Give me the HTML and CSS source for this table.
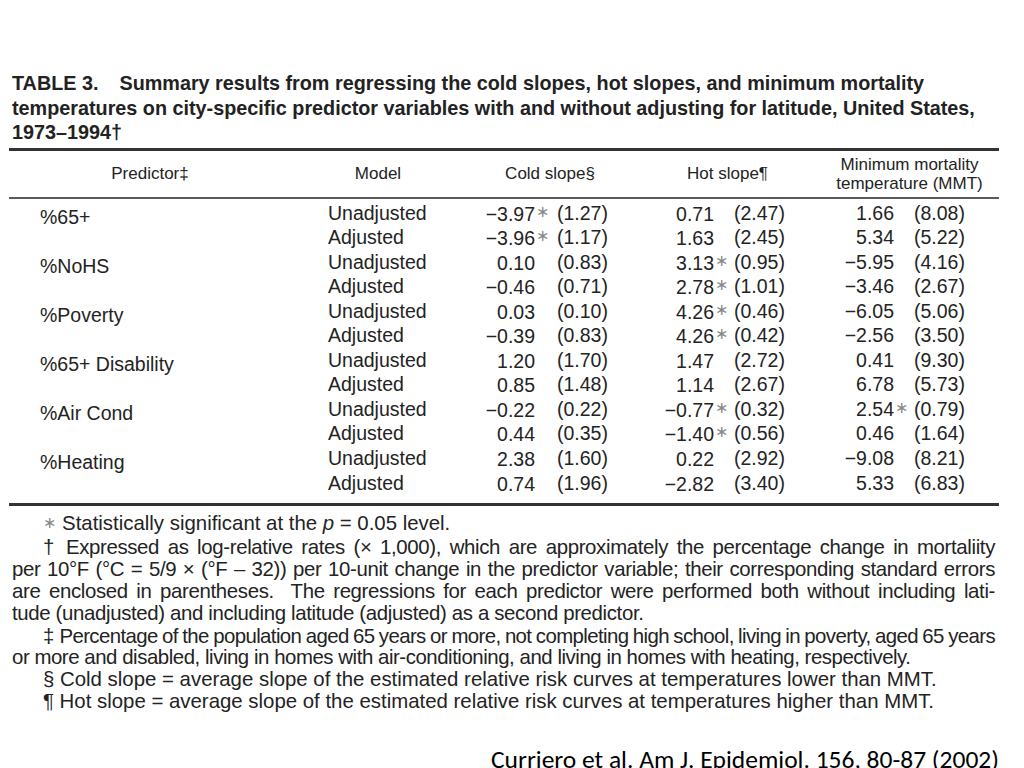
FILE: index.html
```html
<!DOCTYPE html>
<html lang="en">
<head>
<meta charset="utf-8">
<title>Table 3</title>
<link rel="stylesheet" href="styles.css">
</head>
<body>
<div class="slide">
  <div class="figure">
    <h1 class="caption"><span class="lbl">TABLE 3.</span>Summary results from regressing the cold slopes, hot slopes, and minimum mortality<br>temperatures on city-specific predictor variables with and without adjusting for latitude, United States,<br>1973–1994†</h1>
    <div class="tbl">
      <div class="thead">
        <div>Predictor‡</div>
        <div>Model</div>
        <div>Cold slope§</div>
        <div>Hot slope¶</div>
        <div>Minimum mortality<br>temperature (MMT)</div>
      </div>
      <div class="tbody">
        <div class="row"><span class="pred">%65+</span><span class="mod">Unadjusted</span><span class="n lo">−3.97</span><span class="s">∗</span><span class="p">(1.27)</span><span class="n lo">0.71</span><span class="s"></span><span class="p">(2.47)</span><span class="n">1.66</span><span class="s"></span><span class="p">(8.08)</span></div>
        <div class="row"><span class="pred"></span><span class="mod">Adjusted</span><span class="n lo">−3.96</span><span class="s">∗</span><span class="p">(1.17)</span><span class="n lo">1.63</span><span class="s"></span><span class="p">(2.45)</span><span class="n">5.34</span><span class="s"></span><span class="p">(5.22)</span></div>
        <div class="row"><span class="pred">%NoHS</span><span class="mod">Unadjusted</span><span class="n lo">0.10</span><span class="s"></span><span class="p">(0.83)</span><span class="n lo">3.13</span><span class="s">∗</span><span class="p">(0.95)</span><span class="n">−5.95</span><span class="s"></span><span class="p">(4.16)</span></div>
        <div class="row"><span class="pred"></span><span class="mod">Adjusted</span><span class="n lo">−0.46</span><span class="s"></span><span class="p">(0.71)</span><span class="n lo">2.78</span><span class="s">∗</span><span class="p">(1.01)</span><span class="n">−3.46</span><span class="s"></span><span class="p">(2.67)</span></div>
        <div class="row"><span class="pred">%Poverty</span><span class="mod">Unadjusted</span><span class="n lo">0.03</span><span class="s"></span><span class="p">(0.10)</span><span class="n lo">4.26</span><span class="s">∗</span><span class="p">(0.46)</span><span class="n">−6.05</span><span class="s"></span><span class="p">(5.06)</span></div>
        <div class="row"><span class="pred"></span><span class="mod">Adjusted</span><span class="n lo">−0.39</span><span class="s"></span><span class="p">(0.83)</span><span class="n lo">4.26</span><span class="s">∗</span><span class="p">(0.42)</span><span class="n">−2.56</span><span class="s"></span><span class="p">(3.50)</span></div>
        <div class="row"><span class="pred">%65+ Disability</span><span class="mod">Unadjusted</span><span class="n lo">1.20</span><span class="s"></span><span class="p">(1.70)</span><span class="n lo">1.47</span><span class="s"></span><span class="p">(2.72)</span><span class="n">0.41</span><span class="s"></span><span class="p">(9.30)</span></div>
        <div class="row"><span class="pred"></span><span class="mod">Adjusted</span><span class="n lo">0.85</span><span class="s"></span><span class="p">(1.48)</span><span class="n lo">1.14</span><span class="s"></span><span class="p">(2.67)</span><span class="n">6.78</span><span class="s"></span><span class="p">(5.73)</span></div>
        <div class="row"><span class="pred">%Air Cond</span><span class="mod">Unadjusted</span><span class="n lo">−0.22</span><span class="s"></span><span class="p">(0.22)</span><span class="n lo">−0.77</span><span class="s">∗</span><span class="p">(0.32)</span><span class="n">2.54</span><span class="s">∗</span><span class="p">(0.79)</span></div>
        <div class="row"><span class="pred"></span><span class="mod">Adjusted</span><span class="n lo">0.44</span><span class="s"></span><span class="p">(0.35)</span><span class="n lo">−1.40</span><span class="s">∗</span><span class="p">(0.56)</span><span class="n">0.46</span><span class="s"></span><span class="p">(1.64)</span></div>
        <div class="row"><span class="pred">%Heating</span><span class="mod">Unadjusted</span><span class="n lo">2.38</span><span class="s"></span><span class="p">(1.60)</span><span class="n lo">0.22</span><span class="s"></span><span class="p">(2.92)</span><span class="n">−9.08</span><span class="s"></span><span class="p">(8.21)</span></div>
        <div class="row"><span class="pred"></span><span class="mod">Adjusted</span><span class="n lo">0.74</span><span class="s"></span><span class="p">(1.96)</span><span class="n lo">−2.82</span><span class="s"></span><span class="p">(3.40)</span><span class="n">5.33</span><span class="s"></span><span class="p">(6.83)</span></div>
      </div>
    </div>
    <div class="notes">
      <p class="note"><span class="ln"><span class="star">∗</span> Statistically significant at the <i>p</i> = 0.05 level.</span></p>
      <p class="note gap cond">
        <span class="ln j">† Expressed as log-relative rates (× 1,000), which are approximately the percentage change in mortaliity</span>
        <span class="ln j flush">per 10°F (°C = 5/9 × (°F – 32)) per 10-unit change in the predictor variable; their corresponding standard errors</span>
        <span class="ln j flush">are enclosed in parentheses.&nbsp; The regressions for each predictor were performed both without including lati-</span>
        <span class="ln flush">tude (unadjusted) and including latitude (adjusted) as a second predictor.</span>
      </p>
      <p class="note gap tight">
        <span class="ln j squeeze">‡ Percentage of the population aged 65 years or more, not completing high school, living in poverty, aged 65 years</span>
        <span class="ln flush">or more and disabled, living in homes with air-conditioning, and living in homes with heating, respectively.</span>
      </p>
      <p class="note"><span class="ln">§ Cold slope = average slope of the estimated relative risk curves at temperatures lower than MMT.</span></p>
      <p class="note"><span class="ln">¶ Hot slope = average slope of the estimated relative risk curves at temperatures higher than MMT.</span></p>
    </div>
  </div>
  <p class="cite">Curriero et al. Am J. Epidemiol. 156, 80-87 (2002)</p>
</div>
</body>
</html>
```

FILE: styles.css
```css
html, body {
  margin: 0;
  padding: 0;
  background: #ffffff;
}

body {
  font-family: "Liberation Sans", Arial, "DejaVu Sans", sans-serif;
  color: #232323;
}

.slide {
  width: 1024px;
  height: 768px;
  overflow: hidden;
  box-sizing: border-box;
  padding: 71px 0 0 9px;
  display: flex;
  flex-direction: column;
}

.figure {
  width: 990px;
}

.caption {
  margin: 0;
  padding-left: 3px;
  font-size: 19.8px;
  font-weight: bold;
  line-height: 24.5px;
  color: #222;
  white-space: nowrap;
}

.caption .lbl {
  margin-right: 21px;
}

.tbl {
  margin-top: 3px;
  border-top: 3px solid #333;
  border-bottom: 3px solid #333;
}

.thead {
  display: grid;
  grid-template-columns: 282px 174px 170px 185px 179px;
  align-items: center;
  height: 46px;
  border-bottom: 2px solid #5a5a5a;
  font-size: 17px;
  line-height: 19px;
  text-align: center;
}

.tbody {
  padding: 2px 0 8px;
  font-size: 19.5px;
}

.row {
  display: grid;
  grid-template-columns: 282px 174px 70px 22px 78px 79px 20px 86px 74px 20px 85px;
  height: 24.55px;
  line-height: 24.55px;
  white-space: nowrap;
}

.pred {
  padding-left: 31px;
  padding-top: 8px;
  line-height: 16.55px;
}

.mod {
  padding-left: 37px;
}

.n {
  text-align: right;
}

.n.lo {
  padding-top: 2px;
  line-height: 22.55px;
}

.s {
  padding-left: 1px;
  font-size: 16px;
  color: #8a8a8a;
  line-height: 22px;
  vertical-align: top;
}

.p {
  text-align: left;
}

.notes {
  margin-top: 6px;
  padding: 0 4px 0 3px;
  font-size: 20.4px;
  line-height: 22px;
}

.note {
  margin: 0;
  padding-left: 31px;
}

.note.gap {
  margin-top: 2px;
}

.note.cond {
  letter-spacing: -0.35px;
}

.note.tight {
  line-height: 21px;
  letter-spacing: -0.45px;
}

.ln {
  display: block;
  white-space: nowrap;
}

.ln.j {
  white-space: normal;
  text-align: justify;
  text-align-last: justify;
}

.ln.squeeze {
  letter-spacing: -0.6px;
  word-spacing: -2px;
}

.ln.flush {
  margin-left: -31px;
}

.star {
  font-size: 16px;
  color: #8a8a8a;
  vertical-align: 2px;
}

.cite {
  margin: 36px 0 0;
  align-self: flex-end;
  padding-right: 25px;
  font-family: Carlito, "Open Sans", "DejaVu Sans", sans-serif;
  font-size: 25.5px;
  line-height: 24px;
  color: #000;
  white-space: nowrap;
}
```
